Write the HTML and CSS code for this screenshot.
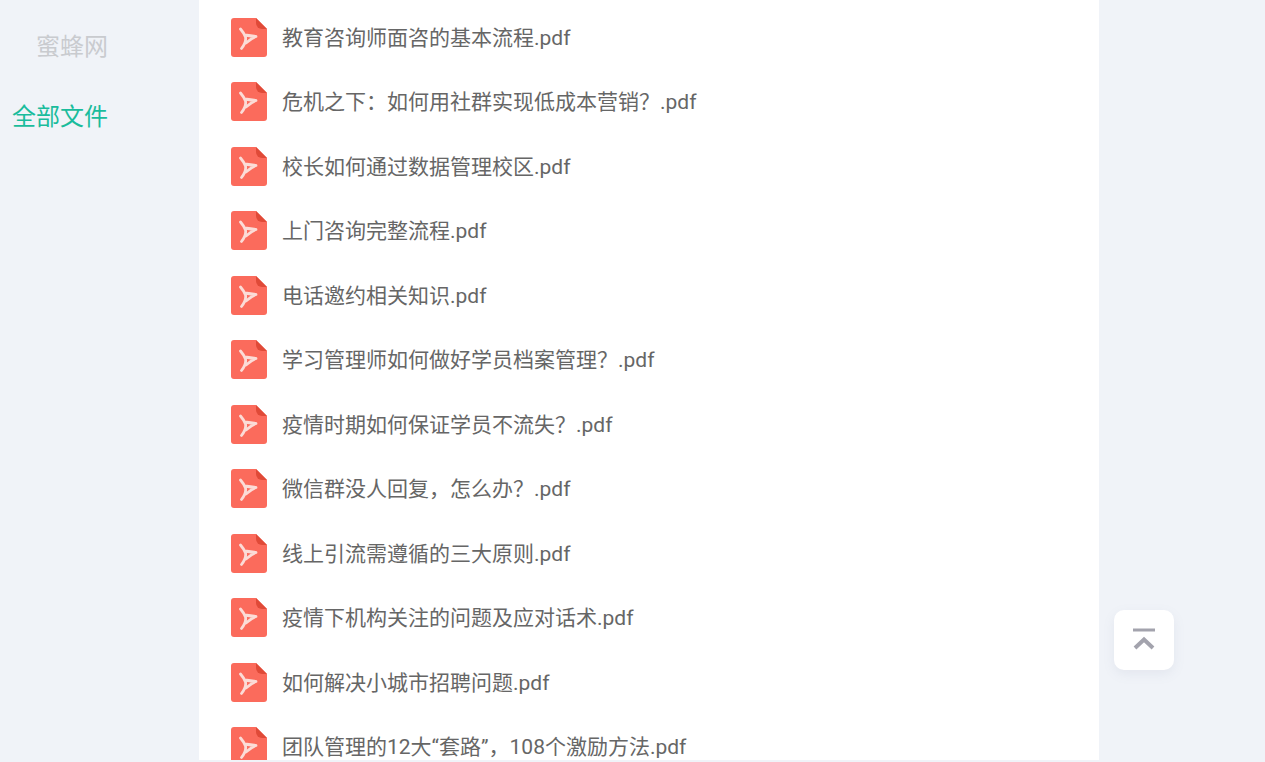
FILE: index.html
```html
<!DOCTYPE html>
<html lang="zh-CN">
<head>
<meta charset="UTF-8">
<title>全部文件</title>
<link rel="stylesheet" href="styles.css">
</head>
<body>
<svg class="sprite" width="0" height="0">
    <symbol id="pdf" viewBox="0 0 36 39">
        <path d="M3 0H25L36 11V36a3 3 0 0 1-3 3H3a3 3 0 0 1-3-3V3a3 3 0 0 1 3-3Z" fill="#fb6b5c"/>
        <path d="M25 0L36 11H31a6 6 0 0 1-6-6Z" fill="#e04a38"/>
        <path d="M9.500 11Q13 15 14.500 19Q15.500 24 10.500 30.500M14 17Q20 18 25 18.500Q20 20.500 15 25" fill="none" stroke="#fbdcd7" stroke-width="2.800" stroke-linecap="round" stroke-linejoin="round"/>
    </symbol>
</svg>
<div class="page">
    <div class="side">
        <div class="site">蜜蜂网</div>
        <div class="all">全部文件</div>
    </div>
    <div class="main">
        <div class="file"><svg class="icon"><use href="#pdf"/></svg><span>教育咨询师面咨的基本流程.pdf</span></div>
        <div class="file"><svg class="icon"><use href="#pdf"/></svg><span>危机之下：如何用社群实现低成本营销？.pdf</span></div>
        <div class="file"><svg class="icon"><use href="#pdf"/></svg><span>校长如何通过数据管理校区.pdf</span></div>
        <div class="file"><svg class="icon"><use href="#pdf"/></svg><span>上门咨询完整流程.pdf</span></div>
        <div class="file"><svg class="icon"><use href="#pdf"/></svg><span>电话邀约相关知识.pdf</span></div>
        <div class="file"><svg class="icon"><use href="#pdf"/></svg><span>学习管理师如何做好学员档案管理？.pdf</span></div>
        <div class="file"><svg class="icon"><use href="#pdf"/></svg><span>疫情时期如何保证学员不流失？.pdf</span></div>
        <div class="file"><svg class="icon"><use href="#pdf"/></svg><span>微信群没人回复，怎么办？.pdf</span></div>
        <div class="file"><svg class="icon"><use href="#pdf"/></svg><span>线上引流需遵循的三大原则.pdf</span></div>
        <div class="file"><svg class="icon"><use href="#pdf"/></svg><span>疫情下机构关注的问题及应对话术.pdf</span></div>
        <div class="file"><svg class="icon"><use href="#pdf"/></svg><span>如何解决小城市招聘问题.pdf</span></div>
        <div class="file"><svg class="icon"><use href="#pdf"/></svg><span>团队管理的12大“套路”，108个激励方法.pdf</span></div>
    </div>
</div>
<div class="to-top">
    <svg width="24" height="24" viewBox="0 0 24 24"><path d="M1 2H23" stroke="#a3a3ad" stroke-width="3" fill="none"/><path d="M3 20L12 11.5L21 20" stroke="#a3a3ad" stroke-width="4" fill="none"/></svg>
</div>
</body>
</html>
```
FILE: styles.css
```css
* {
    margin: 0;
    padding: 0;
}

html, body {
    height: 100%;
    overflow: hidden;
}

body {
    background: #f0f3f8;
    font-family: Roboto, "Noto Sans CJK SC", sans-serif;
}

.sprite {
    display: block;
    height: 0;
}

.page {
    display: flex;
    height: 760px;
}

.side {
    width: 199px;
    flex: none;
    font-size: 24px;
    line-height: 36px;
}

.site {
    padding: 29px 0 0 36px;
    color: #c9cbcf;
}

.all {
    padding: 34px 0 0 12px;
    color: #1abc9c;
}

.main {
    width: 900px;
    flex: none;
    padding-top: 5px;
    overflow: hidden;
    background: #fff;
}

.file {
    display: flex;
    align-items: center;
    gap: 15px;
    padding-left: 32px;
    height: 64.5px;
    color: #666;
    font-size: 21px;
}

.file span {
    margin-bottom: 3px;
}

.icon {
    flex: none;
    width: 36px;
    height: 39px;
}

.to-top {
    position: fixed;
    right: 91px;
    bottom: 92px;
    display: flex;
    align-items: center;
    justify-content: center;
    width: 60px;
    height: 60px;
    border-radius: 10px;
    background: #fff;
    box-shadow: 0 4px 12px rgba(120, 130, 160, 0.1);
}
```
